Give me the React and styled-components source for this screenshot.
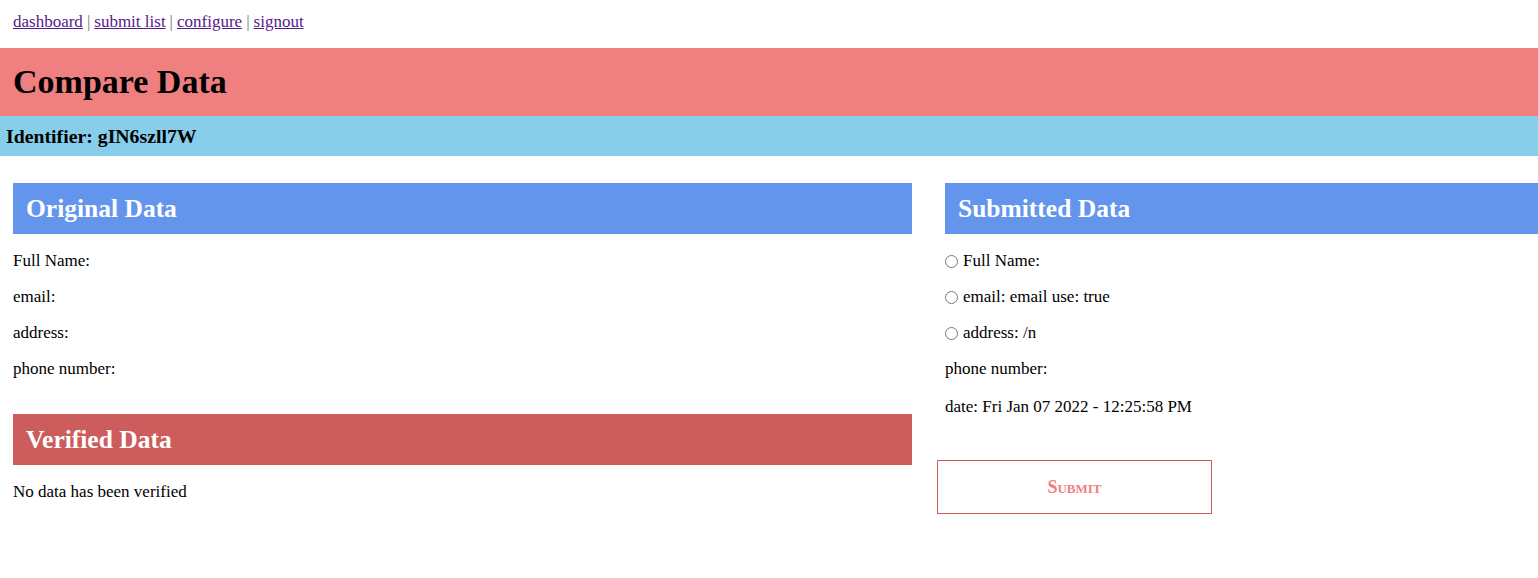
import React from 'react';
import styled, { createGlobalStyle } from 'styled-components';

const GlobalStyle = createGlobalStyle`
  body {
    margin: 0;
    font-family: "Liberation Serif", "Times New Roman", serif;
    font-size: 17px;
    color: #000;
    background: #fff;
  }
`;

const Nav = styled.nav`
  height: 48px;
  padding-left: 13px;
  display: flex;
  align-items: center;
  color: #777;
  line-height: 18px;
  padding-bottom: 4px;
  box-sizing: border-box;
`;

const NavLink = styled.a`
  color: #551a8b;
  text-decoration: underline;
`;

const Sep = styled.span`
  margin: 0 4px;
`;

const TitleBar = styled.header`
  background: #f08080;
  height: 68px;
  display: flex;
  align-items: center;
  padding-left: 13px;
`;

const Title = styled.h1`
  margin: 0;
  font-size: 34px;
  font-weight: bold;
`;

const IdBar = styled.div`
  background: #87ceeb;
  height: 40px;
  display: flex;
  align-items: center;
  padding-left: 6px;
`;

const IdText = styled.h3`
  margin: 0;
  font-size: 19.8px;
  font-weight: bold;
`;

const Columns = styled.main`
  display: grid;
  grid-template-columns: 899px 1fr;
  column-gap: 33px;
  padding: 27px 0 0 13px;
`;

const Column = styled.section`
  display: flex;
  flex-direction: column;
`;

const SectionHead = styled.h2`
  margin: 0;
  height: 51px;
  display: flex;
  align-items: center;
  padding-left: 13px;
  background: ${p => (p.$tone === 'red' ? '#cd5c5c' : '#6495ed')};
  color: #fff;
  font-size: 25.5px;
  font-weight: bold;
`;

const Rows = styled.div`
  padding-top: 18px;
  display: flex;
  flex-direction: column;
  gap: 18px;
  margin-bottom: ${p => p.$after || 0}px;
`;

const Row = styled.div`
  display: flex;
  align-items: center;
  line-height: 18px;
  margin-top: ${p => p.$extra || 0}px;
`;

const Radio = styled.input.attrs({ type: 'radio' })`
  width: 13px;
  height: 13px;
  margin: 0 5px 0 0;
`;

const SubmitButton = styled.button`
  align-self: flex-start;
  margin: 44px 0 0 -8px;
  width: 275px;
  height: 54px;
  background: #fff;
  border: 1px solid #cd5c5c;
  color: #f08080;
  font-family: "Liberation Serif", "Times New Roman", serif;
  font-size: 18px;
  font-weight: bold;
  font-variant: small-caps;
  cursor: pointer;
`;

const links = ['dashboard', 'submit list', 'configure', 'signout'];

const original = ['Full Name:', 'email:', 'address:', 'phone number:'];

const submitted = [
  { label: 'Full Name:', radio: true },
  { label: 'email: email use: true', radio: true },
  { label: 'address: /n', radio: true },
  { label: 'phone number:' },
  { label: 'date: Fri Jan 07 2022 - 12:25:58 PM', extra: 2 },
];

export default function App() {
  return (
    <>
      <GlobalStyle />
      <Nav>
        {links.map((l, i) => (
          <React.Fragment key={l}>
            {i > 0 && <Sep>|</Sep>}
            <NavLink href="#">{l}</NavLink>
          </React.Fragment>
        ))}
      </Nav>
      <TitleBar>
        <Title>Compare Data</Title>
      </TitleBar>
      <IdBar>
        <IdText>Identifier: gIN6szll7W</IdText>
      </IdBar>
      <Columns>
        <Column>
          <SectionHead>Original Data</SectionHead>
          <Rows $after={36}>
            {original.map(r => (
              <Row key={r}>{r}</Row>
            ))}
          </Rows>
          <SectionHead $tone="red">Verified Data</SectionHead>
          <Rows>
            <Row>No data has been verified</Row>
          </Rows>
        </Column>
        <Column>
          <SectionHead>Submitted Data</SectionHead>
          <Rows>
            {submitted.map(r => (
              <Row key={r.label} $extra={r.extra}>
                {r.radio && <Radio name={r.label} />}
                {r.label}
              </Row>
            ))}
          </Rows>
          <SubmitButton>Submit</SubmitButton>
        </Column>
      </Columns>
    </>
  );
}
